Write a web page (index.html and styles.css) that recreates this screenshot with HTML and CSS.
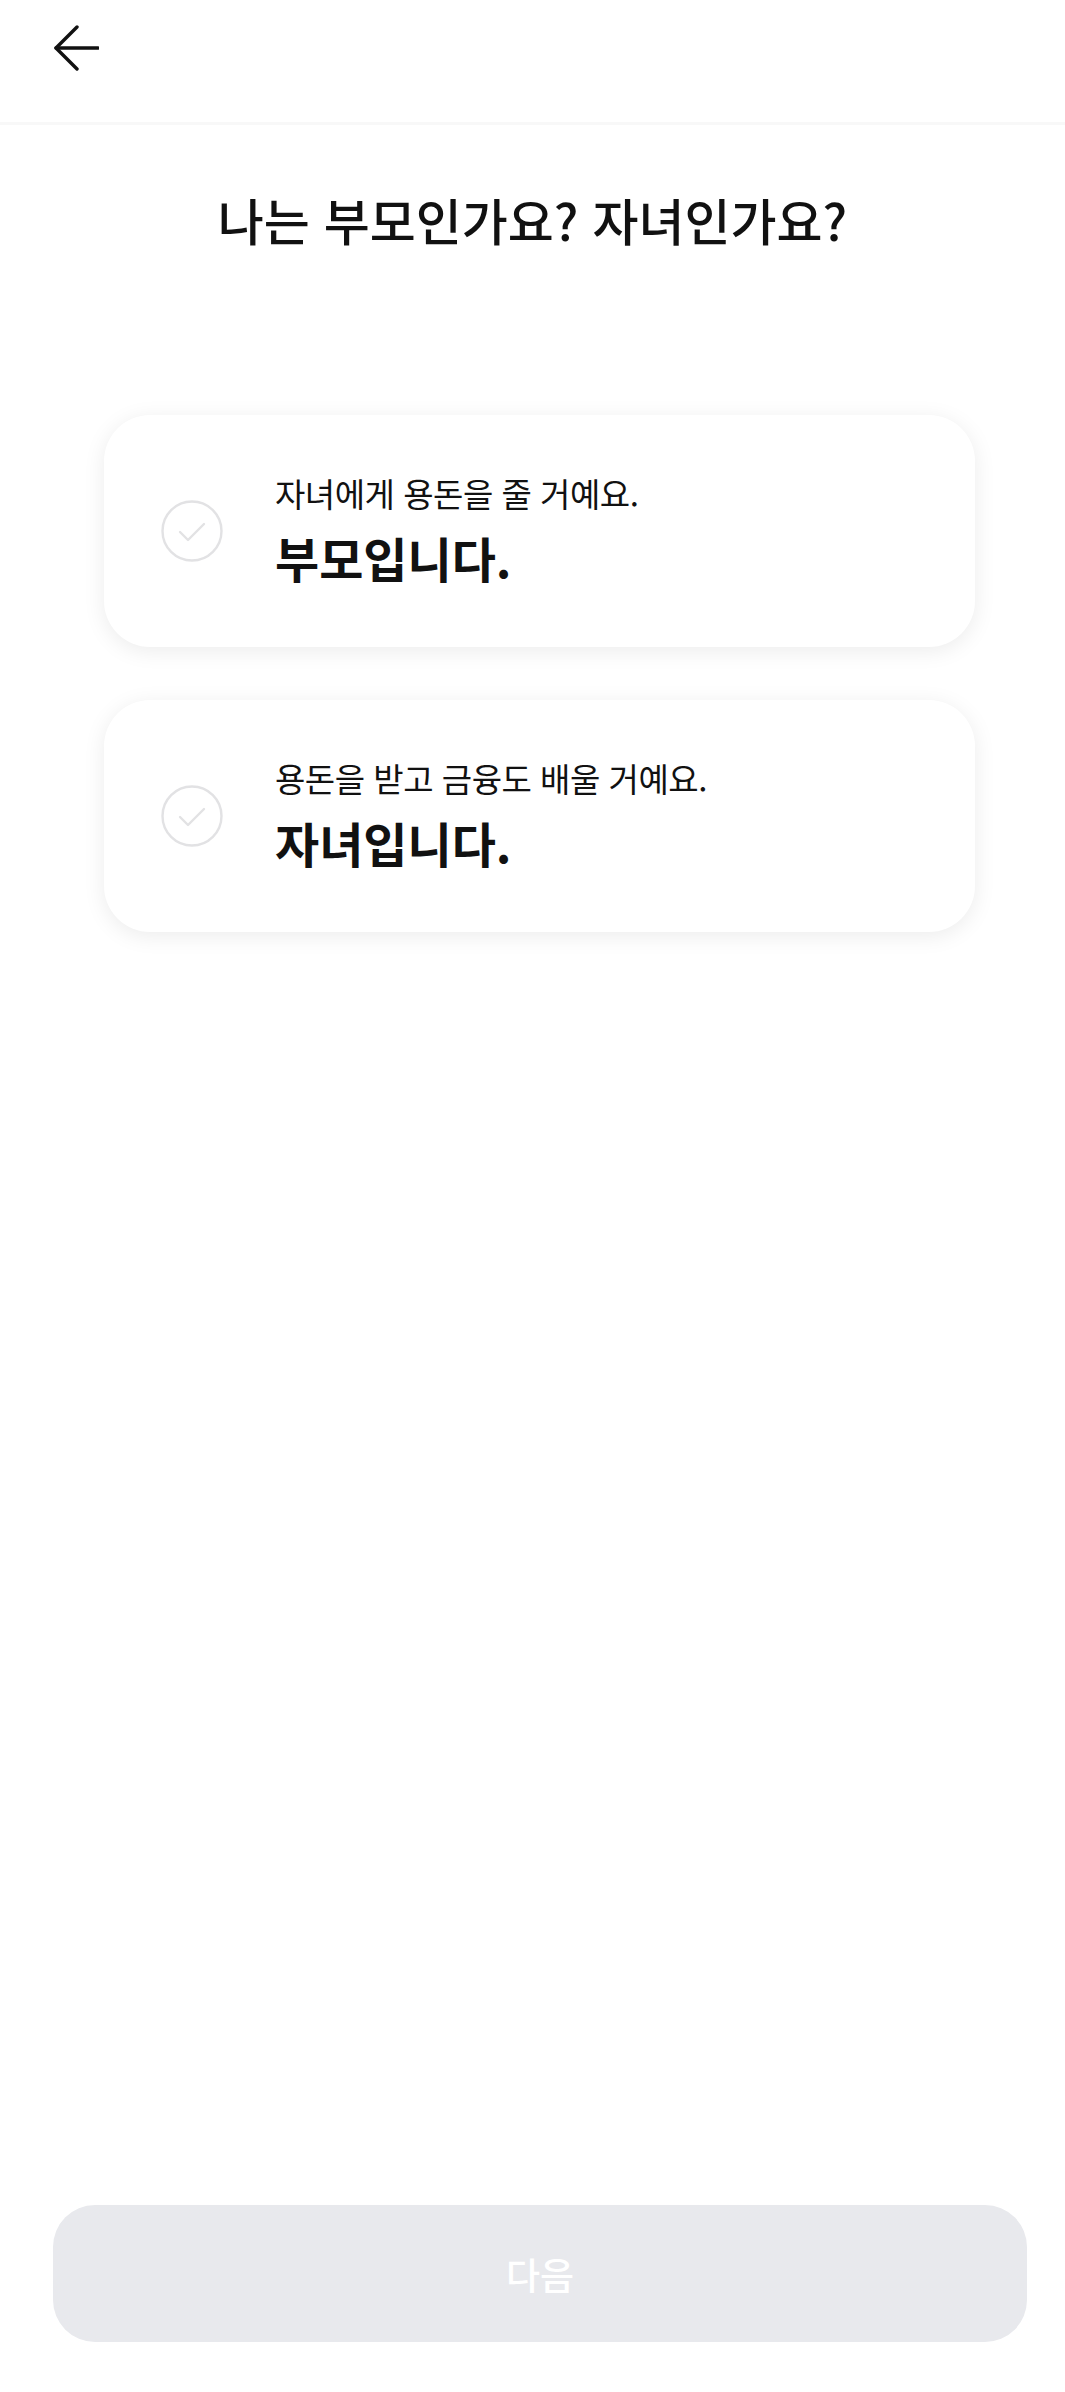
FILE: index.html
```html
<!DOCTYPE html>
<html lang="ko">

<head>
    <meta charset="UTF-8">
    <meta name="viewport" content="width=device-width, initial-scale=1.0">
    <title>회원 유형 선택</title>
    <link rel="stylesheet" href="styles.css">
</head>

<body>
    <div class="page">
        <div class="topbar">
            <button class="back-btn" type="button">
                <svg width="46" height="46" viewBox="0 0 46 46" fill="none" stroke="#111" stroke-width="3.4"
                    stroke-linecap="round" stroke-linejoin="round">
                    <path d="M45 23H3" />
                    <path d="M24 2L3 23L24 44" />
                </svg>
            </button>
        </div>

        <h1 class="question">나는 부모인가요? 자녀인가요?</h1>

        <div class="choice-list">
            <div class="choice">
                <div class="check">
                    <svg width="62" height="62" viewBox="0 0 62 62" fill="none" stroke="#e2e2e4" stroke-width="2.4"
                        stroke-linecap="round" stroke-linejoin="round">
                        <circle cx="31" cy="31" r="29.5" />
                        <path d="M19 32L27 40L43 24" />
                    </svg>
                </div>
                <div class="choice-text">
                    <div class="choice-sub">자녀에게 용돈을 줄 거예요.</div>
                    <div class="choice-main">부모입니다.</div>
                </div>
            </div>
            <div class="choice">
                <div class="check">
                    <svg width="62" height="62" viewBox="0 0 62 62" fill="none" stroke="#e2e2e4" stroke-width="2.4"
                        stroke-linecap="round" stroke-linejoin="round">
                        <circle cx="31" cy="31" r="29.5" />
                        <path d="M19 32L27 40L43 24" />
                    </svg>
                </div>
                <div class="choice-text">
                    <div class="choice-sub">용돈을 받고 금융도 배울 거예요.</div>
                    <div class="choice-main">자녀입니다.</div>
                </div>
            </div>
        </div>

        <button class="next-btn" type="button" disabled>다음</button>
    </div>
</body>

</html>
```
FILE: styles.css
```css
* {
    padding: 0;
    margin: 0;
    box-sizing: border-box;
}

body {
    background-color: #fff;
    font-family: "Noto Sans CJK KR", "Noto Sans", sans-serif;
    color: #111;
}

.page {
    min-height: 100vh;
    display: flex;
    flex-direction: column;
}

.topbar {
    height: 125px;
    border-bottom: 3px solid #f8f8f8;
    padding: 25px 0 0 53px;
}

.back-btn {
    border: none;
    background: none;
    width: 46px;
    height: 46px;
    cursor: pointer;
}

.question {
    margin-top: 64px;
    text-align: center;
    font-size: 50px;
    font-weight: 500;
    line-height: 60px;
}

.choice-list {
    margin: 166px 0 0 104px;
    width: 871px;
    display: flex;
    flex-direction: column;
    gap: 53px;
}

.choice {
    height: 232px;
    border-radius: 46px;
    background-color: #fff;
    box-shadow: 0 4px 22px rgba(0, 0, 0, 0.08);
    display: flex;
    align-items: center;
    padding-left: 57px;
}

.check {
    width: 62px;
    height: 62px;
    margin-right: 52px;
}

.choice-text {
    display: flex;
    flex-direction: column;
    gap: 16px;
    margin-top: -4px;
}

.choice-sub {
    font-size: 33px;
    line-height: 40px;
    letter-spacing: -0.5px;
}

.choice-main {
    font-size: 48px;
    font-weight: 700;
    line-height: 56px;
}

.next-btn {
    margin: auto 38px 50px 53px;
    height: 137px;
    border: none;
    border-radius: 42px;
    background-color: #e8e9ed;
    color: #fff;
    font-family: "Noto Sans CJK KR", "Noto Sans", sans-serif;
    font-size: 37px;
    font-weight: 500;
}
```
